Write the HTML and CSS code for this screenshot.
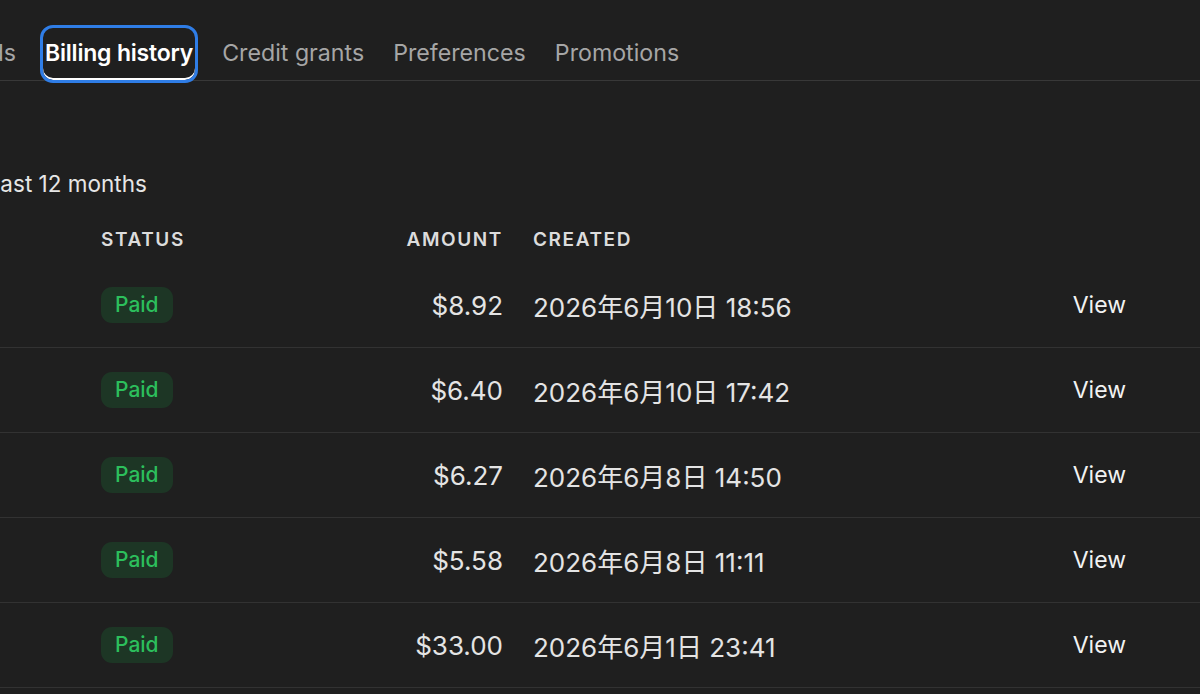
FILE: index.html
```html
<!DOCTYPE html>
<html lang="en">
<head>
    <title>Billing history</title>
    <meta name="viewport" content="width=device-width, initial-scale=1.0" />
    <link rel="stylesheet" href="styles.css">
</head>

<body>
    <div class="page">
        <nav class="tabs">
            <div class="tabs-before">
                <a class="tab">Overview</a>
                <a class="tab">Payment methods</a>
            </div>
            <a class="tab active">Billing history</a>
            <a class="tab">Credit grants</a>
            <a class="tab">Preferences</a>
            <a class="tab">Promotions</a>
        </nav>

        <section class="history">
            <h3 class="period">Past 12 months</h3>

            <div class="invoices">
                <div class="row head">
                    <span>Invoice</span>
                    <span>Status</span>
                    <span class="amount">Amount</span>
                    <span>Created</span>
                    <span></span>
                </div>
                <div class="row">
                    <span class="invoice">8F2A1C-0012</span>
                    <span><span class="badge">Paid</span></span>
                    <span class="amount">$8.92</span>
                    <span>2026年6月10日 18:56</span>
                    <a class="view">View</a>
                </div>
                <div class="row">
                    <span class="invoice">8F2A1C-0011</span>
                    <span><span class="badge">Paid</span></span>
                    <span class="amount">$6.40</span>
                    <span>2026年6月10日 17:42</span>
                    <a class="view">View</a>
                </div>
                <div class="row">
                    <span class="invoice">8F2A1C-0010</span>
                    <span><span class="badge">Paid</span></span>
                    <span class="amount">$6.27</span>
                    <span>2026年6月8日 14:50</span>
                    <a class="view">View</a>
                </div>
                <div class="row">
                    <span class="invoice">8F2A1C-0009</span>
                    <span><span class="badge">Paid</span></span>
                    <span class="amount">$5.58</span>
                    <span>2026年6月8日 11:11</span>
                    <a class="view">View</a>
                </div>
                <div class="row">
                    <span class="invoice">8F2A1C-0008</span>
                    <span><span class="badge">Paid</span></span>
                    <span class="amount">$33.00</span>
                    <span>2026年6月1日 23:41</span>
                    <a class="view">View</a>
                </div>
            </div>
        </section>
    </div>
</body>

</html>
```

FILE: styles.css
```css
body {
    margin: 0;
    background: #1f1f1f;
    color: #e4e4e4;
    font-family: Inter, "Noto Sans CJK JP", sans-serif;
    overflow: hidden;
}

/* the settings page is wider than the window, cropped on both sides */
.page {
    margin: 0 -40px 0 -200px;
}

/* tabs */
.tabs {
    display: flex;
    gap: 25px;
    padding-top: 28px;
    border-bottom: 1px solid #383838;
}

.tabs-before {
    display: flex;
    gap: 25px;
    width: 218px;
    justify-content: flex-end;
}

.tab {
    font-size: 23.2px;
    line-height: 30px;
    padding: 10px 2px 12px;
    color: #a6a6a6;
    white-space: nowrap;
    cursor: pointer;
}

.tab.active {
    color: #fff;
    font-weight: 600;
    font-size: 23px;
    letter-spacing: -0.2px;
    box-shadow: inset 0 -2px 0 #fff;
    outline: 3px solid #2f7de6;
    border-radius: 10px;
}

/* history table */
.history {
    padding-left: 186px;
}

.period {
    margin: 88px 0 16px;
    font-size: 22.5px;
    font-weight: 400;
    line-height: 30px;
    color: #e6e6e6;
}

.row {
    display: grid;
    grid-template-columns: 271px 140px 232px 1fr auto;
    column-gap: 30px;
    align-items: center;
    height: 84px;
    padding-right: 114px;
    margin-left: -186px;
    font-size: 26px;
    border-bottom: 1px solid #323232;
}

.row.head {
    height: 48px;
    border-bottom: none;
    font-size: 19px;
    font-weight: 600;
    letter-spacing: 1.6px;
    text-transform: uppercase;
    color: #dcdcdc;
}

.row > span:first-child {
    visibility: hidden;
}

.amount {
    text-align: right;
}

.badge {
    display: inline-block;
    padding: 0 14px;
    line-height: 36px;
    border-radius: 11px;
    background: #1d3625;
    color: #2cbf5c;
    font-size: 21px;
    font-weight: 500;
}

.view {
    color: #f2f2f2;
    font-size: 23px;
    cursor: pointer;
}
```
